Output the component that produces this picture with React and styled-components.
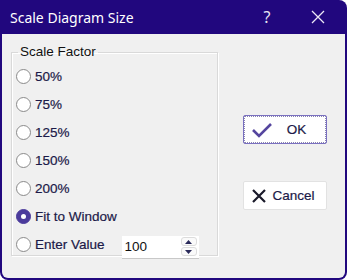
import * as React from "react";
import styled, { createGlobalStyle } from "styled-components";

const GlobalStyle = createGlobalStyle`
  html, body {
    margin: 0;
    padding: 0;
    background: #ffffff;
  }
`;

const Window = styled.div`
  width: 347px;
  height: 280px;
  box-sizing: border-box;
  background: #21077e;
  border-radius: 0 8px 8px 8px;
  padding: 0 2px 2px 2px;
  display: flex;
  flex-direction: column;
  font-family: "Liberation Sans", Arial, sans-serif;
`;

const TitleBar = styled.div`
  height: 34px;
  display: flex;
  align-items: center;
  padding-left: 8px;
  color: #ffffff;
  font-family: "Noto Sans", "Open Sans", sans-serif;
  font-size: 14px;
`;

const Title = styled.div`
  flex: 1;
`;

const TitleButton = styled.div`
  width: ${p => p.w}px;
  display: flex;
  justify-content: center;
  align-items: center;
  color: #e8e4f4;
  font-size: 16px;
`;

const Body = styled.div`
  flex: 1;
  background: #f0f0f0;
  border-radius: 0 0 6px 6px;
  display: flex;
  padding: 10px 0 0 9px;
`;

const Group = styled.fieldset`
  margin: 0;
  width: 207px;
  height: 212px;
  box-sizing: border-box;
  border: 1px solid #d9d9d9;
  box-shadow: inset 1px 1px 0 #ffffff, 1px 1px 0 #ffffff;
  padding: 2px 0 0 4px;
  display: flex;
  flex-direction: column;
`;

const Legend = styled.legend`
  padding: 0 2px;
  margin-left: 2px;
  font-size: 13.5px;
  line-height: 16px;
  color: #111111;
`;

const Row = styled.div`
  height: 28px;
  flex-shrink: 0;
  display: flex;
  align-items: center;
  font-size: 13.5px;
  color: #1c1a48;
  -webkit-text-stroke: 0.2px #1c1a48;
`;

const Radio = styled.span`
  width: 15px;
  height: 15px;
  box-sizing: border-box;
  border-radius: 50%;
  border: 1px solid ${p => (p.checked ? "#4b3b9c" : "#8a8a8a")};
  background: ${p => (p.checked ? "#4b3b9c" : "#ffffff")};
  margin-right: 4px;
  display: flex;
  align-items: center;
  justify-content: center;
  &::after {
    content: "";
    display: ${p => (p.checked ? "block" : "none")};
    width: 5px;
    height: 5px;
    border-radius: 50%;
    background: #ffffff;
  }
`;

const Spinner = styled.div`
  margin-left: 17px;
  width: 77px;
  height: 22px;
  box-sizing: border-box;
  background: #ffffff;
  box-shadow: 0 1px 0 #c8c8c8;
  display: flex;
  align-items: center;
  padding: 0 2px 0 3px;
  margin-top: 5px;
  -webkit-text-stroke: 0;
`;

const SpinValue = styled.div`
  flex: 1;
  font-size: 13.5px;
  color: #111111;
`;

const SpinButtons = styled.div`
  display: flex;
  flex-direction: column;
  gap: 1px;
`;

const SpinButton = styled.div`
  width: 16px;
  height: 9px;
  box-sizing: border-box;
  border: 1px solid #dcdcdc;
  border-radius: 3px;
  background: #fafafa;
  display: flex;
  align-items: center;
  justify-content: center;
`;

const Side = styled.div`
  display: flex;
  flex-direction: column;
  padding: 71px 0 0 25px;
  gap: 37px;
`;

const Button = styled.div`
  width: 84px;
  height: 29px;
  box-sizing: border-box;
  background: #ffffff;
  border: 1px solid ${p => (p.focused ? "#7a70c0" : "#e2e2e2")};
  outline: ${p => (p.focused ? "1px dotted #8a86b0" : "none")};
  outline-offset: -2px;
  border-radius: 2px;
  display: flex;
  align-items: center;
  padding-left: 7px;
  font-size: 13.5px;
  color: #1c1a48;
  -webkit-text-stroke: 0.2px #1c1a48;
`;

const ButtonText = styled.span`
  flex: 1;
  text-align: center;
  padding-right: 6px;
`;

const options = ["50%", "75%", "125%", "150%", "200%", "Fit to Window"];

function App() {
  return (
    <>
      <GlobalStyle />
      <Window>
        <TitleBar>
          <Title>Scale Diagram Size</Title>
          <TitleButton w={48}>?</TitleButton>
          <TitleButton w={54}>
            <svg width="14" height="14" viewBox="0 0 14 14">
              <path d="M1 1 L13 13 M13 1 L1 13" stroke="#ece8f6" strokeWidth="1.3" />
            </svg>
          </TitleButton>
        </TitleBar>
        <Body>
          <Group>
            <Legend>Scale Factor</Legend>
            {options.map(o => (
              <Row key={o}>
                <Radio checked={o === "Fit to Window"} />
                {o}
              </Row>
            ))}
            <Row>
              <Radio />
              Enter Value
              <Spinner>
                <SpinValue>100</SpinValue>
                <SpinButtons>
                  <SpinButton>
                    <svg width="7" height="4" viewBox="0 0 7 4">
                      <path d="M0 4 L3.5 0 L7 4 Z" fill="#2a2a5a" />
                    </svg>
                  </SpinButton>
                  <SpinButton>
                    <svg width="7" height="4" viewBox="0 0 7 4">
                      <path d="M0 0 L3.5 4 L7 0 Z" fill="#2a2a5a" />
                    </svg>
                  </SpinButton>
                </SpinButtons>
              </Spinner>
            </Row>
          </Group>
          <Side>
            <Button focused>
              <svg width="22" height="16" viewBox="0 0 22 16">
                <path d="M2 8 L8 14 L20 2" fill="none" stroke="#55459e" strokeWidth="2.6" />
              </svg>
              <ButtonText>OK</ButtonText>
            </Button>
            <Button>
              <svg width="16" height="16" viewBox="0 0 16 16">
                <path d="M2 2 L14 14 M14 2 L2 14" stroke="#1a1a2a" strokeWidth="2.2" />
              </svg>
              <ButtonText>Cancel</ButtonText>
            </Button>
          </Side>
        </Body>
      </Window>
    </>
  );
}

export default App;
